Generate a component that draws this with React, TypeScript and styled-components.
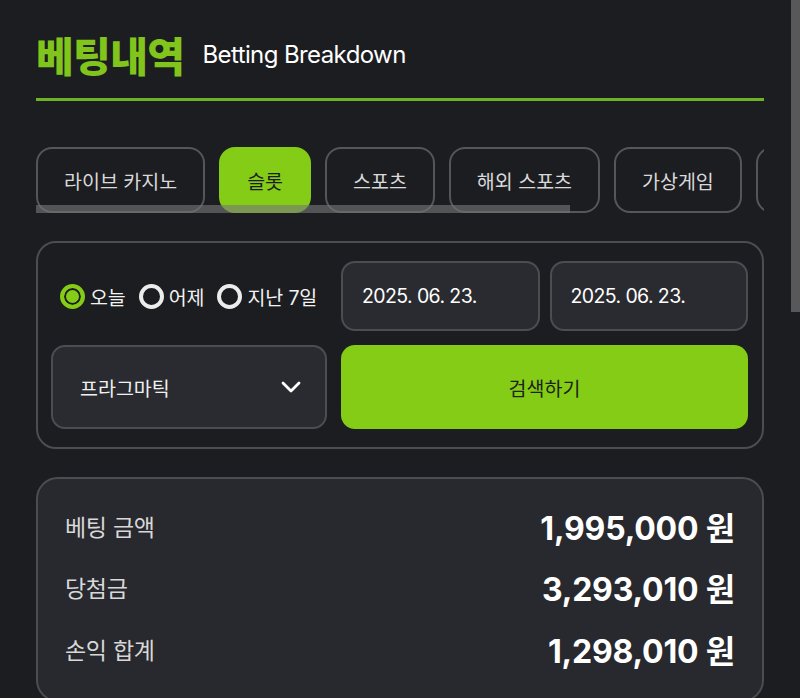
import React from 'react'
import styled, { createGlobalStyle } from 'styled-components'

const BG = '#1c1d21'
const PANEL = '#28292e'
const FIELD = '#2a2b30'
const LINE = '#4c4d52'
const GREEN = '#84cc16'

const KO = `Inter, "Noto Sans CJK KR", sans-serif`

const GlobalStyle = createGlobalStyle`
  html {
    background: ${BG};
    scrollbar-width: none;
  }
  html::-webkit-scrollbar {
    display: none;
  }
  body {
    margin: 0;
    background: ${BG};
    color: #fff;
    font-family: ${KO};
  }
  * {
    box-sizing: border-box;
  }
`

const Page = styled.div`
  width: 764px;
  padding-left: 36px;
  min-height: 1562px;
`

// page scroll indicator, drawn over the right edge
const PageScrollThumb = styled.div`
  position: fixed;
  top: 0;
  right: 0;
  width: 9px;
  height: 312px;
  background: #58585b;
`

const Header = styled.div`
  display: flex;
  align-items: center;
  gap: 18px;
  padding: 34px 0 24px;
  border-bottom: 3px solid #6cb424;
`

const Title = styled.h1`
  margin: 0;
  font-family: "Noto Sans CJK KR", sans-serif;
  font-size: 41px;
  line-height: 40px;
  font-weight: 800;
  letter-spacing: -0.6px;
  color: #80c41c;
`

const Subtitle = styled.span`
  font-family: Inter, sans-serif;
  font-size: 24px;
  font-weight: 400;
  letter-spacing: -0.6px;
  color: #fff;
`

const TabScroller = styled.div`
  position: relative;
  margin-top: 46px;
  overflow: hidden;
`

const TabRow = styled.div`
  display: flex;
  gap: 14px;
`

const Tab = styled.button<{ $active?: boolean }>`
  flex-shrink: 0;
  height: 66px;
  padding: 0 26px;
  border-radius: 16px;
  border: 2px solid ${p => (p.$active ? GREEN : '#55565a')};
  background: ${p => (p.$active ? GREEN : 'transparent')};
  color: ${p => (p.$active ? '#1b1c1f' : '#d9d9d9')};
  font-family: ${KO};
  font-size: 19.5px;
  white-space: nowrap;
  cursor: pointer;
`

const ScrollThumb = styled.div`
  position: absolute;
  left: 0;
  bottom: 0;
  width: 534px;
  height: 8px;
  background: rgba(118, 118, 120, 0.62);
`

const FilterCard = styled.div`
  margin-top: 28px;
  border: 2px solid ${LINE};
  border-radius: 20px;
  padding: 18px 14px 18px 13px;
  display: grid;
  grid-template-columns: 276px 1fr;
  grid-template-rows: 70px 84px;
  gap: 14px;
`

const RadioGroup = styled.div`
  display: flex;
  align-items: center;
  padding-left: 9px;
`

const RadioItem = styled.label`
  display: flex;
  align-items: center;
  flex-shrink: 0;
  gap: 5px;
  margin-right: 13px;
  font-size: 19.5px;
  letter-spacing: -0.1px;
  white-space: nowrap;
  color: #f2f2f2;
`

const RadioDot = styled.span<{ $checked?: boolean }>`
  flex-shrink: 0;
  width: 25px;
  height: 25px;
  border-radius: 50%;
  border: 4px solid ${p => (p.$checked ? GREEN : '#ececec')};
  background: ${p => (p.$checked ? GREEN : BG)};
  box-shadow: inset 0 0 0 2px ${BG};
`

const DateRow = styled.div`
  display: grid;
  grid-template-columns: 1fr 1fr;
  gap: 10px;
`

const Field = styled.div`
  display: flex;
  align-items: center;
  background: ${FIELD};
  border: 2px solid ${LINE};
  border-radius: 14px;
  padding: 0 19px;
  font-size: 19.5px;
  letter-spacing: -0.6px;
  color: #fff;
`

const SelectBox = styled(Field)`
  justify-content: space-between;
  padding: 0 24px 0 27px;
  letter-spacing: 0;
  color: #f0f0f0;
`

const SearchButton = styled.button`
  border: none;
  border-radius: 14px;
  background: ${GREEN};
  color: #1e2316;
  font-family: ${KO};
  font-size: 19.5px;
  cursor: pointer;
`

const Summary = styled.div`
  margin-top: 28px;
  background: ${PANEL};
  border: 2px solid ${LINE};
  border-radius: 22px;
  padding: 16px 27px 20px;
`

const SummaryRow = styled.div`
  display: flex;
  justify-content: space-between;
  align-items: center;
  height: 61.5px;
`

const Label = styled.span`
  font-size: 23px;
  letter-spacing: -0.3px;
  color: #d8d8d8;
`

const Amount = styled.span`
  font-size: 32px;
  font-weight: 700;
  letter-spacing: -0.2px;
  color: #fff;
`

const Chevron = () => (
  <svg width="20" height="12" viewBox="0 0 20 12" fill="none">
    <path d="M2 2l8 8 8-8" stroke="#fff" strokeWidth="2.8" strokeLinecap="round" strokeLinejoin="round" />
  </svg>
)

const tabs = ['라이브 카지노', '슬롯', '스포츠', '해외 스포츠', '가상게임', '미니게임']

const ranges = [
  { label: '오늘', checked: true },
  { label: '어제', checked: false },
  { label: '지난 7일', checked: false },
]

const totals = [
  { label: '베팅 금액', value: '1,995,000' },
  { label: '당첨금', value: '3,293,010' },
  { label: '손익 합계', value: '1,298,010' },
]

const App: React.FC = () => {
  return (
    <Page>
      <GlobalStyle />
      <PageScrollThumb />
      <Header>
        <Title>베팅내역</Title>
        <Subtitle>Betting Breakdown</Subtitle>
      </Header>

      <TabScroller>
        <TabRow>
          {tabs.map(t => (
            <Tab key={t} $active={t === '슬롯'}>{t}</Tab>
          ))}
        </TabRow>
        <ScrollThumb />
      </TabScroller>

      <FilterCard>
        <RadioGroup>
          {ranges.map(r => (
            <RadioItem key={r.label}>
              <RadioDot $checked={r.checked} />
              {r.label}
            </RadioItem>
          ))}
        </RadioGroup>
        <DateRow>
          <Field>2025. 06. 23.</Field>
          <Field>2025. 06. 23.</Field>
        </DateRow>
        <SelectBox>
          프라그마틱
          <Chevron />
        </SelectBox>
        <SearchButton>검색하기</SearchButton>
      </FilterCard>

      <Summary>
        {totals.map(row => (
          <SummaryRow key={row.label}>
            <Label>{row.label}</Label>
            <Amount>{row.value} 원</Amount>
          </SummaryRow>
        ))}
      </Summary>
    </Page>
  )
}

export default App
